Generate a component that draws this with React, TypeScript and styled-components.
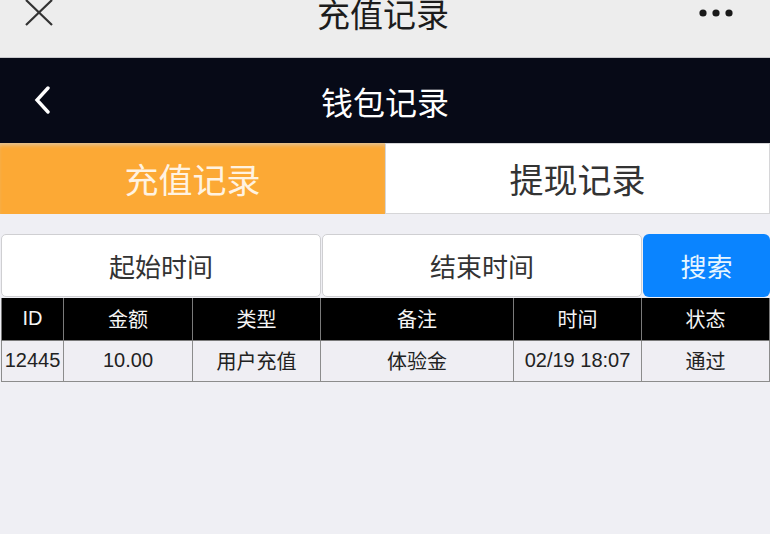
import * as React from 'react';
import styled, { createGlobalStyle } from 'styled-components';

const GlobalStyle = createGlobalStyle`
  html, body {
    margin: 0;
    padding: 0;
    background: #efeff4;
    font-family: "Liberation Sans", "Noto Sans CJK SC", sans-serif;
  }
  * {
    box-sizing: border-box;
  }
`;

type Record = {
  id: string;
  amount: string;
  type: string;
  note: string;
  time: string;
  status: string;
};

const records: Record[] = [
  {
    id: '12445',
    amount: '10.00',
    type: '用户充值',
    note: '体验金',
    time: '02/19 18:07',
    status: '通过',
  },
];

const columns = [
  { title: 'ID', width: 62 },
  { title: '金额', width: 129 },
  { title: '类型', width: 128 },
  { title: '备注', width: 193 },
  { title: '时间', width: 128 },
  { title: '状态', width: 128 },
];

export default function App() {
  const [tab, setTab] = React.useState<'charge' | 'withdraw'>('charge');

  return (
    <Page>
      <GlobalStyle />
      <WebBar>
        <WebBarRow>
          <CloseIcon width="28" height="26" viewBox="0 0 28 26">
            <path d="M1 0 L27 25 M27 0 L1 25" stroke="#333" strokeWidth="2.2" fill="none" />
          </CloseIcon>
          <WebTitle>充值记录</WebTitle>
          <MoreIcon width="36" height="8" viewBox="0 0 36 8">
            <circle cx="4" cy="4" r="3.6" fill="#1a1a1a" />
            <circle cx="17" cy="4" r="3.6" fill="#1a1a1a" />
            <circle cx="30" cy="4" r="3.6" fill="#1a1a1a" />
          </MoreIcon>
        </WebBarRow>
      </WebBar>

      <NavBar>
        <BackIcon width="20" height="28" viewBox="0 0 20 28">
          <path d="M16 2 L5 14 L16 26" stroke="#fff" strokeWidth="3.4" fill="none" strokeLinecap="round" />
        </BackIcon>
        <NavTitle>钱包记录</NavTitle>
      </NavBar>

      <Tabs>
        <Tab active={tab === 'charge'} onClick={() => setTab('charge')}>
          充值记录
        </Tab>
        <Tab active={tab === 'withdraw'} onClick={() => setTab('withdraw')}>
          提现记录
        </Tab>
      </Tabs>

      <SearchRow>
        <DateField>起始时间</DateField>
        <DateField>结束时间</DateField>
        <SearchButton type="button">搜索</SearchButton>
      </SearchRow>

      <Table>
        <colgroup>
          {columns.map((c) => (
            <col key={c.title} style={{ width: c.width }} />
          ))}
        </colgroup>
        <thead>
          <tr>
            {columns.map((c) => (
              <Th key={c.title}>{c.title}</Th>
            ))}
          </tr>
        </thead>
        <tbody>
          {records.map((r) => (
            <tr key={r.id}>
              <Td>{r.id}</Td>
              <Td>{r.amount}</Td>
              <Td>{r.type}</Td>
              <Td>{r.note}</Td>
              <Td>{r.time}</Td>
              <Td>{r.status}</Td>
            </tr>
          ))}
        </tbody>
      </Table>
    </Page>
  );
}

const Page = styled.div`
  width: 770px;
  min-height: 534px;
  background: #efeff4;
  overflow: hidden;
`;

const WebBar = styled.div`
  height: 58px;
  background: #ededed;
  border-bottom: 1px solid #c8c8cc;
`;

const WebBarRow = styled.div`
  height: 26px;
  display: flex;
  align-items: center;
  justify-content: space-between;
  padding: 0 35px 0 25px;
`;

const CloseIcon = styled.svg`
  margin-top: -1px;
`;

const MoreIcon = styled.svg``;

const WebTitle = styled.div`
  font-family: "Noto Sans CJK SC", sans-serif;
  font-size: 33px;
  line-height: 26px;
  color: #1c1c1c;
  margin-left: 14px;
`;

const NavBar = styled.div`
  height: 85px;
  background: #070a17;
  display: flex;
  align-items: center;
  justify-content: center;
  position: relative;
`;

const BackIcon = styled.svg`
  position: absolute;
  left: 32px;
  top: 28px;
`;

const NavTitle = styled.div`
  font-family: "Noto Sans CJK SC", sans-serif;
  font-size: 32px;
  color: #ffffff;
`;

const Tabs = styled.div`
  display: grid;
  grid-template-columns: 385px 1fr;
  height: 71px;
`;

const Tab = styled.div<{ active: boolean }>`
  display: flex;
  align-items: center;
  justify-content: center;
  font-family: "Noto Sans CJK SC", sans-serif;
  font-size: 34px;
  cursor: pointer;
  background: ${(p) => (p.active ? '#fca935' : '#ffffff')};
  color: ${(p) => (p.active ? '#fff3e2' : '#333333')};
  border: ${(p) => (p.active ? 'none' : '1px solid #d6d6d8')};
  box-shadow: ${(p) => (p.active ? 'inset 0 4px 4px -2px rgba(220, 200, 170, 0.9)' : 'none')};
`;

const SearchRow = styled.div`
  display: grid;
  grid-template-columns: 320px 320px 1fr;
  gap: 1px;
  margin-top: 20px;
  padding-left: 1px;
  height: 63px;
`;

const DateField = styled.div`
  background: #ffffff;
  border: 1px solid #cfcfd2;
  border-radius: 5px;
  display: flex;
  align-items: center;
  justify-content: center;
  font-family: "Noto Sans CJK SC", sans-serif;
  font-size: 26px;
  color: #333333;
`;

const SearchButton = styled.button`
  background: #0a84ff;
  border: none;
  border-radius: 6px;
  color: #e8f6ff;
  font-family: "Noto Sans CJK SC", sans-serif;
  font-size: 26px;
  padding: 0;
  cursor: pointer;
`;

const Table = styled.table`
  width: 768px;
  margin-top: 1px;
  margin-left: 1px;
  border-collapse: collapse;
  table-layout: fixed;
`;

const Th = styled.th`
  height: 42px;
  background: #000000;
  color: #f4f4f4;
  font-weight: normal;
  font-size: 20px;
  border: 1px solid #7a7a7a;
  border-top: none;
  padding: 0;
  text-align: center;
`;

const Td = styled.td`
  height: 41px;
  background: #efeef3;
  color: #222222;
  font-size: 20px;
  border: 1px solid #8c8c8c;
  padding: 0;
  text-align: center;
  white-space: nowrap;
`;
